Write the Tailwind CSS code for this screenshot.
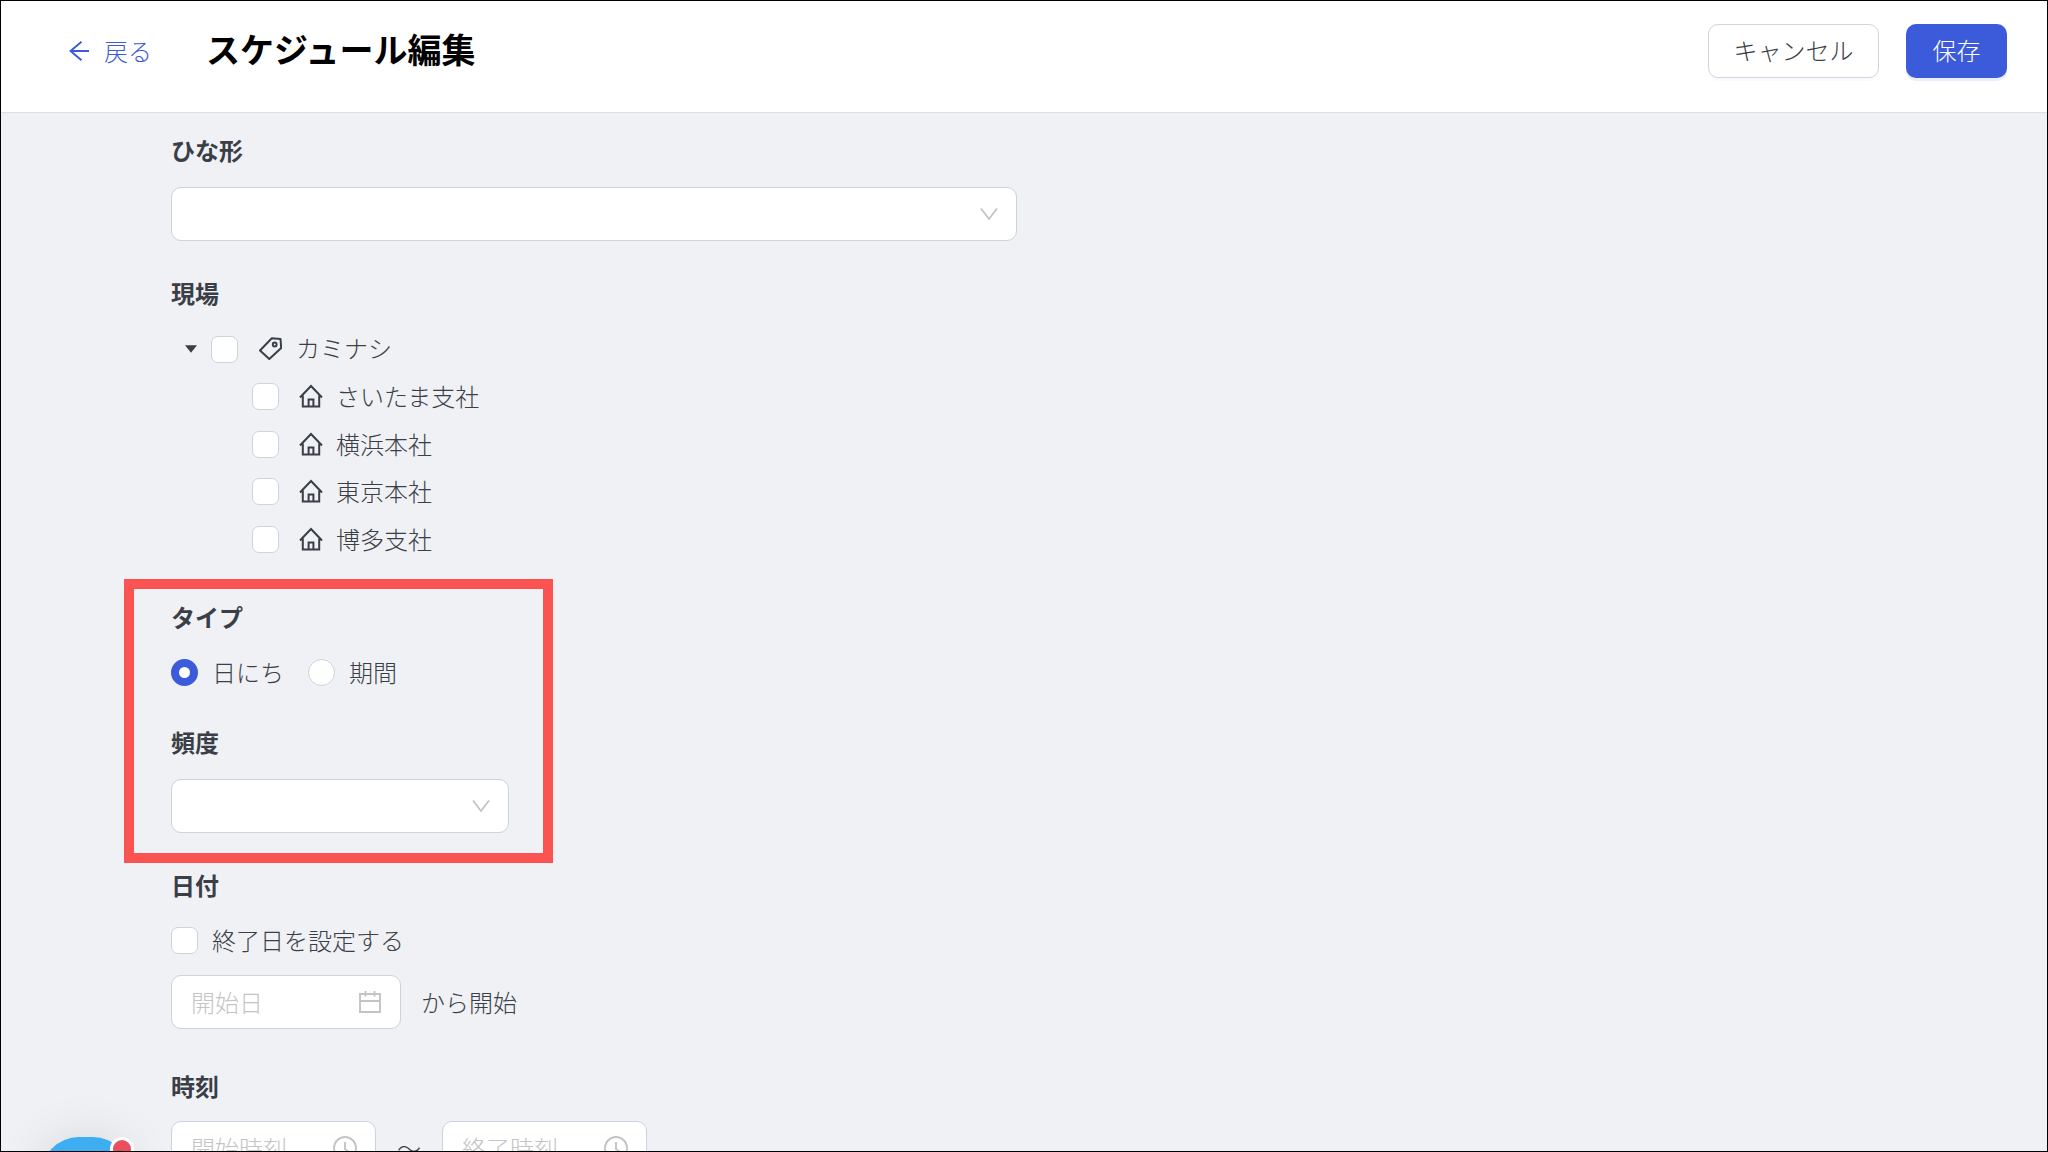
<!DOCTYPE html>
<html lang="ja">
<head>
  <meta charset="UTF-8">
  <meta name="viewport" content="width=device-width, initial-scale=1">
  <title>スケジュール編集</title>
  <script src="https://cdn.jsdelivr.net/npm/@tailwindcss/browser@4"></script>
</head>
<body class="relative h-screen overflow-hidden flex flex-col border border-black bg-[#f0f1f5] text-[#3a3f47] text-[24px] leading-[32px] font-light font-['Noto_Sans_CJK_JP',sans-serif]">

  <!-- Icons -->
  <svg class="hidden">
    <symbol id="home" viewBox="0 0 24 24" fill="none" stroke="currentColor" stroke-width="2">
      <path d="M1 13.500 12 2l11 11.500M3.800 11.500v11h16.400v-11M9.600 22.500v-7h4.800v7"/>
    </symbol>
    <symbol id="chevron" viewBox="0 0 18 12" fill="none" stroke="currentColor" stroke-width="1.800">
      <path d="M1 .5 9 11 17 .5"/>
    </symbol>
    <symbol id="clock" viewBox="0 0 24 24" fill="none" stroke="currentColor" stroke-width="1.900">
      <circle cx="12" cy="12" r="11"/>
      <path d="M12 6v7l4.500 3.300"/>
    </symbol>
  </svg>

  <header class="flex shrink-0 items-start h-[112px] pt-[23px] pl-[68px] pr-[40px] bg-white border-b border-[#d9e0e9]">
    <a href="#" class="flex items-center gap-[15px] h-[54px] text-[#3b5bdb]">
      <svg class="w-[20px] h-[20px]" viewBox="0 0 20 20" fill="none" stroke="currentColor" stroke-width="1.900">
        <path d="M20 10H1.500M12.500.8 1.500 10l11 9.200"/>
      </svg>
      戻る
    </a>
    <h1 class="ml-[54px] text-[34px] leading-[50px] font-bold text-black">スケジュール編集</h1>
    <div class="flex gap-[27px] ml-auto">
      <button class="w-[171px] h-[54px] pb-[2px] rounded-[10px] border border-[#ced4e0] bg-white shadow-[0_3px_0_#00000005]">キャンセル</button>
      <button class="w-[101px] h-[54px] pb-[2px] rounded-[10px] bg-[#3b5bdb] text-white shadow-[0_3px_0_#3b5bdb1a]">保存</button>
    </div>
  </header>

  <main class="pl-[170px]">
    <section class="pt-[21px]">
      <label for="template" class="block font-bold">ひな形</label>
      <div class="relative mt-[21px] w-[846px] max-w-full">
        <select id="template" class="block w-full h-[54px] rounded-[10px] border border-[#cbd3df] bg-white appearance-none"></select>
        <svg class="absolute right-[19px] top-[21px] w-[18px] h-[12px] text-[#c4c4c4]"><use href="#chevron"/></svg>
      </div>
    </section>

    <section class="mt-[36px]">
      <h2 class="font-bold">現場</h2>
      <ul class="mt-[16px]">
        <li>
          <div class="flex items-center h-[48px] pl-[14px]">
            <svg class="w-[12px] h-[8px]" viewBox="0 0 11 7" fill="currentColor"><path d="M0 0h11L5.500 7z"/></svg>
            <input type="checkbox" id="site0" class="ml-[14px] w-[27px] h-[27px] rounded-[7px] border border-[#cbd3df] bg-white appearance-none">
            <label for="site0" class="flex items-center gap-[14px] ml-[21px] pb-[2px]">
              <svg class="w-[23px] h-[23px]" viewBox="0 0 23 23" fill="none" stroke="currentColor" stroke-width="2" stroke-linejoin="round">
                <path d="M1 13.500 12.800 1.300l8.700.7.700 9L10.300 22z"/>
                <circle cx="15.700" cy="7.500" r="1.900"/>
              </svg>
              カミナシ
            </label>
          </div>
          <ul class="pl-[81px]">
            <li class="flex items-center h-[47px]">
              <input type="checkbox" id="site1" class="w-[27px] h-[27px] rounded-[7px] border border-[#cbd3df] bg-white appearance-none">
              <label for="site1" class="flex items-center gap-[13px] ml-[20px] pb-[1px]"><svg class="w-[24px] h-[24px]"><use href="#home"/></svg>さいたま支社</label>
            </li>
            <li class="flex items-center h-[48px]">
              <input type="checkbox" id="site2" class="w-[27px] h-[27px] rounded-[7px] border border-[#cbd3df] bg-white appearance-none">
              <label for="site2" class="flex items-center gap-[13px] ml-[20px] pb-[1px]"><svg class="w-[24px] h-[24px]"><use href="#home"/></svg>横浜本社</label>
            </li>
            <li class="flex items-center h-[47px]">
              <input type="checkbox" id="site3" class="w-[27px] h-[27px] rounded-[7px] border border-[#cbd3df] bg-white appearance-none">
              <label for="site3" class="flex items-center gap-[13px] ml-[20px] pb-[1px]"><svg class="w-[24px] h-[24px]"><use href="#home"/></svg>東京本社</label>
            </li>
            <li class="flex items-center h-[48px]">
              <input type="checkbox" id="site4" class="w-[27px] h-[27px] rounded-[7px] border border-[#cbd3df] bg-white appearance-none">
              <label for="site4" class="flex items-center gap-[13px] ml-[20px] pb-[1px]"><svg class="w-[24px] h-[24px]"><use href="#home"/></svg>博多支社</label>
            </li>
          </ul>
        </li>
      </ul>
    </section>

    <!-- Highlighted settings -->
    <section class="-ml-[47px] mt-[16px] w-[429px] h-[284px] border-[10px] border-[#fb5252] pl-[37px] pt-[12px]">
      <fieldset>
        <legend class="font-bold">タイプ</legend>
        <div class="flex items-center gap-[24px] mt-[22px] h-[34px]">
          <label class="flex items-center gap-[14px]">
            <input type="radio" name="type" checked class="w-[27px] h-[27px] rounded-full border border-[#cbd3df] bg-white appearance-none checked:border-[8px] checked:border-[#3b5bdb]">
            日にち
          </label>
          <label class="flex items-center gap-[14px]">
            <input type="radio" name="type" class="w-[27px] h-[27px] rounded-full border border-[#cbd3df] bg-white appearance-none checked:border-[8px] checked:border-[#3b5bdb]">
            期間
          </label>
        </div>
      </fieldset>
      <label for="frequency" class="block mt-[37px] font-bold">頻度</label>
      <div class="relative mt-[21px] w-[338px]">
        <select id="frequency" class="block w-full h-[54px] rounded-[10px] border border-[#cbd3df] bg-white appearance-none"></select>
        <svg class="absolute right-[19px] top-[21px] w-[18px] h-[12px] text-[#c4c4c4]"><use href="#chevron"/></svg>
      </div>
    </section>

    <section class="mt-[6px]">
      <h2 class="font-bold">日付</h2>
      <label class="flex items-center gap-[14px] mt-[22px] h-[34px]">
        <input type="checkbox" class="w-[27px] h-[27px] rounded-[7px] border border-[#cbd3df] bg-white appearance-none">
        終了日を設定する
      </label>
      <div class="flex items-center gap-[20px] mt-[18px]">
        <div class="relative w-[230px]">
          <input type="text" aria-label="開始日" placeholder="開始日" class="block w-full h-[54px] rounded-[10px] border border-[#cbd3df] bg-white pl-[19px] pb-[2px] placeholder-[#c4c4c4]">
          <svg class="absolute right-[20px] top-[16px] w-[22px] h-[22px] text-[#c4c4c4]" viewBox="0 0 22 22" fill="none" stroke="currentColor" stroke-width="1.900">
            <path d="M1 3h20v18H1zM1 10h20M6.500 0v5.500M15.500 0v5.500"/>
          </svg>
        </div>
        <span>から開始</span>
      </div>
    </section>

    <section class="mt-[41px]">
      <h2 class="font-bold">時刻</h2>
      <div class="flex items-center gap-[21px] mt-[19px]">
        <div class="relative w-[205px]">
          <input type="text" aria-label="開始時刻" placeholder="開始時刻" class="block w-full h-[54px] rounded-[10px] border border-[#cbd3df] bg-white pl-[19px] pb-[2px] placeholder-[#c4c4c4]">
          <svg class="absolute right-[19px] top-[15px] w-[24px] h-[24px] text-[#c4c4c4]"><use href="#clock"/></svg>
        </div>
        <span>〜</span>
        <div class="relative w-[205px]">
          <input type="text" aria-label="終了時刻" placeholder="終了時刻" class="block w-full h-[54px] rounded-[10px] border border-[#cbd3df] bg-white pl-[19px] pb-[2px] placeholder-[#c4c4c4]">
          <svg class="absolute right-[19px] top-[15px] w-[24px] h-[24px] text-[#c4c4c4]"><use href="#clock"/></svg>
        </div>
      </div>
    </section>
  </main>

  <!-- Chat launcher -->
  <button aria-label="チャット" class="absolute left-[40px] -bottom-[76px] w-[90px] h-[90px] rounded-[38px] bg-[#3eaef3] shadow-[0_0_50px_#0000001c]">
    <span class="absolute -right-[3px] top-0 w-[24px] h-[24px] rounded-full border-[3px] border-white bg-[#ec4f5c]"></span>
  </button>

</body>
</html>
